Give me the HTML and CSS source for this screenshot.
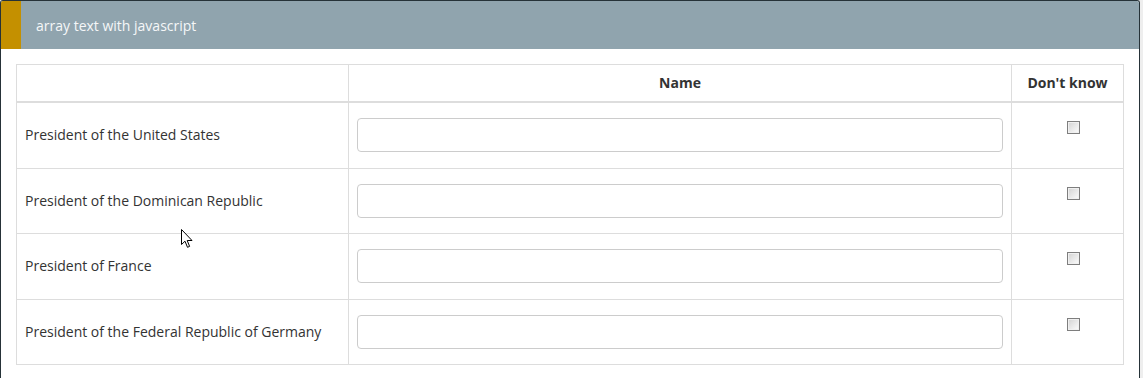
FILE: index.html
```html
<!DOCTYPE html>
<html lang="en">
<head>
    <meta charset="UTF-8">
    <title>array text with javascript</title>
    <link rel="stylesheet" href="styles.css">
</head>
<body>
    <div class="panel">
        <div class="panel-heading">
            <span class="panel-title">array text with javascript</span>
        </div>
        <div class="panel-body">
            <table class="question-table">
                <thead>
                    <tr>
                        <th class="col-label"></th>
                        <th class="col-name">Name</th>
                        <th class="col-dk">Don't know</th>
                    </tr>
                </thead>
                <tbody>
                    <tr>
                        <td class="answer-label">President of the United States</td>
                        <td><input type="text" class="form-control"></td>
                        <td class="dk-cell"><input type="checkbox" class="dk-box"></td>
                    </tr>
                    <tr>
                        <td class="answer-label">President of the Dominican Republic</td>
                        <td><input type="text" class="form-control"></td>
                        <td class="dk-cell"><input type="checkbox" class="dk-box"></td>
                    </tr>
                    <tr>
                        <td class="answer-label">President of France</td>
                        <td><input type="text" class="form-control"></td>
                        <td class="dk-cell"><input type="checkbox" class="dk-box"></td>
                    </tr>
                    <tr>
                        <td class="answer-label">President of the Federal Republic of Germany</td>
                        <td><input type="text" class="form-control"></td>
                        <td class="dk-cell"><input type="checkbox" class="dk-box"></td>
                    </tr>
                </tbody>
            </table>
        </div>
    </div>

    <!-- mouse pointer seen in the screenshot -->
    <svg class="pointer" width="13" height="20" viewBox="0 0 13 20">
        <path d="M0.5 0.5 L0.5 15.5 L4 12.2 L6.5 18.3 L8.6 17.4 L6.2 11.5 L11 11.5 Z" fill="#fff" stroke="#000" stroke-width="1"/>
    </svg>
</body>
</html>
```

FILE: styles.css
```css
body {
    margin: 0;
    background-color: #eeeeee;
    font-family: 'Open Sans', 'DejaVu Sans', sans-serif;
    font-size: 14px;
    color: #333;
    position: relative;
}
.panel {
    width: 1138px;
    height: 400px;
    background-color: white;
    border: 1px solid #263238;
    border-bottom: none;
    border-radius: 3px 3px 0 0;
    overflow: hidden;
}
.panel-heading {
    height: 48px;
    display: flex;
    align-items: center;
    background-color: #90a4ae;
    border-left: 20px solid #c49000;
    padding-left: 15px;
}
.panel-title {
    color: #f5f7f8;
    font-size: 14px;
}
.panel-body {
    padding: 15px;
}
.question-table {
    width: 100%;
    table-layout: fixed;
    border-collapse: collapse;
}
.question-table th,
.question-table td {
    border: 1px solid #dddddd;
    padding: 8px;
    line-height: 20px;
}
.question-table th {
    box-sizing: border-box;
    border-bottom: 2px solid #dddddd;
    font-weight: bold;
    text-align: center;
    height: 37px;
}
.col-label {
    width: 332px;
}
.col-dk {
    width: 112px;
}
.answer-label {
    vertical-align: middle;
}
.form-control {
    display: block;
    box-sizing: border-box;
    width: 100%;
    height: 34px;
    margin: 7.25px 0;
    padding: 6px 12px;
    border: 1px solid #cccccc;
    border-radius: 4px;
    font-family: inherit;
    font-size: 14px;
}
.dk-cell {
    vertical-align: top;
    text-align: center;
}
.dk-box {
    appearance: none;
    display: inline-block;
    width: 13px;
    height: 13px;
    margin: 10px 0 0 12px;
    border: 1px solid #7e7e7e;
    background: linear-gradient(135deg, #d2d2d2, #fdfdfd);
    box-shadow: inset 0 0 0 1px #f0f0f0;
}
.pointer {
    position: absolute;
    left: 181px;
    top: 229px;
}
```
